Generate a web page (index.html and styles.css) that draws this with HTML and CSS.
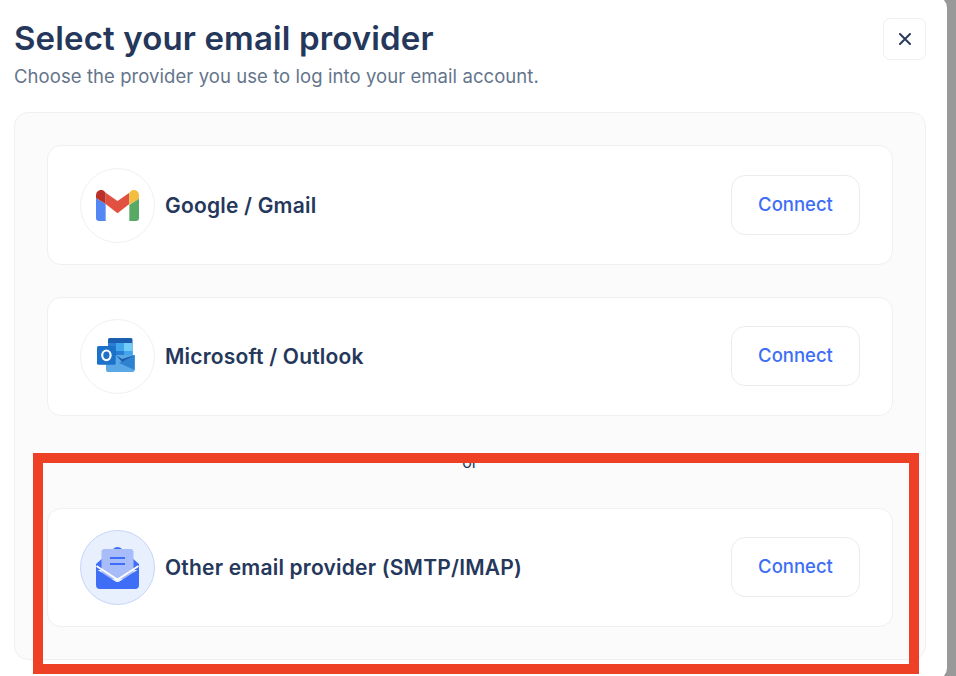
FILE: index.html
```html
<!DOCTYPE html>
<html lang="en">
<head>
    <meta charset="UTF-8">
    <meta name="viewport" content="width=device-width, initial-scale=1.0">
    <title>Select your email provider</title>
    <link rel="stylesheet" href="styles.css">
</head>
<body>
    <div class="modal">
        <div class="modal-header">
            <div>
                <h1 class="title">Select your email provider</h1>
                <p class="subtitle">Choose the provider you use to log into your email account.</p>
            </div>
            <button class="close-button" aria-label="Close">
                <svg width="12" height="12" viewBox="0 0 12 12"><path d="M1 1l10 10M11 1L1 11" stroke="#2a3b5c" stroke-width="2" stroke-linecap="round"/></svg>
            </button>
        </div>
        <div class="panel">
            <div class="card">
                <div class="provider">
                    <div class="icon-circle">
                        <svg width="43" height="31" viewBox="0 0 43 31">
                            <path d="M0 8L9.67 14V31H3a3 3 0 0 1-3-3z" fill="#5387f3"/>
                            <path d="M0 8V5a5 5 0 0 1 8-4l1.67 1.67V14z" fill="#b93128"/>
                            <path d="M9.67 2.67L21.5 11l11.83-8.33V14L21.5 23.3 9.67 14z" fill="#e05141"/>
                            <path d="M33.33 2.67L35 1a5 5 0 0 1 8 4v3.67L33.33 15z" fill="#f3bd42"/>
                            <path d="M33.33 15L43 8.67V28a3 3 0 0 1-3 3h-6.67z" fill="#58a866"/>
                        </svg>
                    </div>
                    <span class="provider-name">Google / Gmail</span>
                </div>
                <button class="connect">Connect</button>
            </div>
            <div class="card">
                <div class="provider">
                    <div class="icon-circle">
                        <svg width="41" height="37" viewBox="0 0 41 37">
                            <rect x="11" y="0" width="24.5" height="26" rx="1.5" fill="#1b5fae"/>
                            <rect x="11" y="5" width="8" height="8" fill="#2a7dd3"/>
                            <rect x="19" y="5" width="8" height="8" fill="#41a5ee"/>
                            <rect x="27" y="5" width="8.5" height="8" fill="#72cbf8"/>
                            <rect x="19" y="13" width="8" height="8" fill="#2a7dd3"/>
                            <rect x="27" y="13" width="8.5" height="8" fill="#41a5ee"/>
                            <path d="M9 17h28.7v15a2 2 0 0 1-2 2H11a2 2 0 0 1-2-2z" fill="#5aa9e6"/>
                            <path d="M22 25l15.7-8v15z" fill="#2f82cf"/>
                            <path d="M19 17l6 7 12.7-7-12.7 4z" fill="#1b5fae"/>
                            <rect x="0" y="8" width="18.7" height="18.7" rx="1.5" fill="#1c71c9"/>
                            <ellipse class="outlook-o" cx="9.4" cy="17.3" rx="4.2" ry="4.8"/>
                        </svg>
                    </div>
                    <span class="provider-name">Microsoft / Outlook</span>
                </div>
                <button class="connect">Connect</button>
            </div>
            <div class="divider">or</div>
            <div class="card">
                <div class="provider">
                    <div class="icon-circle other">
                        <svg width="43" height="43" viewBox="0 0 43 43">
                            <path d="M0 18L17 3a6 6 0 0 1 9 0l17 15v6H0z" fill="#3d6ef5"/>
                            <rect x="5.5" y="3" width="32" height="30" rx="3" fill="#a8bcfa"/>
                            <path d="M14 12h15M14 18h15" stroke="#3d6ef5" stroke-width="2"/>
                            <path d="M0 23l19.5 12.5a4 4 0 0 0 4 0L43 23v16a4 4 0 0 1-4 4H4a4 4 0 0 1-4-4z" fill="#3d6ef5"/>
                            <path d="M0.5 20l20 13a2 2 0 0 0 2 0l20-13" fill="none" stroke="#fff" stroke-width="2"/>
                        </svg>
                    </div>
                    <span class="provider-name">Other email provider (SMTP/IMAP)</span>
                </div>
                <button class="connect">Connect</button>
            </div>
        </div>
    </div>
    <div class="highlight"></div>
</body>
</html>
```

FILE: styles.css
```css
* {
    box-sizing: border-box;
}
html, body {
    height: 100%;
    overflow: hidden;
}
body {
    margin: 0;
    background-color: #999;
    font-family: Inter, "Liberation Sans", sans-serif;
    color: #25375b;
}
.modal {
    width: 947px;
    height: 684px;
    margin-top: -4px;
    padding: 22px 21px 0 14px;
    background-color: #fff;
    border-radius: 0 12px 12px 0;
}
.modal-header {
    display: flex;
    justify-content: space-between;
    align-items: flex-start;
    height: 94px;
}
.title {
    margin: 0;
    font-size: 33px;
    line-height: 40px;
    font-weight: 600;
    letter-spacing: 0.13px;
}
.subtitle {
    margin: 5px 0 0;
    font-size: 18.5px;
    line-height: 26px;
    letter-spacing: 0.07px;
    color: #64748b;
}
.close-button {
    display: flex;
    justify-content: center;
    align-items: center;
    width: 43px;
    height: 42px;
    padding: 0;
    background-color: #fff;
    border: 1px solid #eff0f2;
    border-radius: 7px;
}
.panel {
    display: flex;
    flex-direction: column;
    height: 548.2px;
    padding: 32.4px 32px 32px;
    background-color: #fbfbfb;
    border: 1px solid #f0f0f0;
    border-radius: 14px;
}
.card {
    display: flex;
    justify-content: space-between;
    align-items: center;
    height: 119.4px;
    padding: 0 32px;
    background-color: #fff;
    border: 1px solid #eff0f2;
    border-radius: 14px;
}
.card + .card {
    margin-top: 32px;
}
.provider {
    display: flex;
    align-items: center;
    gap: 10px;
}
.icon-circle {
    display: flex;
    justify-content: center;
    align-items: center;
    width: 75px;
    height: 75px;
    background-color: #fff;
    border: 1px solid #eff0f2;
    border-radius: 50%;
}
.icon-circle.other {
    background-color: #e8f0fe;
    border-color: #c5d5fb;
}
.outlook-o {
    fill: none;
    stroke: #fff;
    stroke-width: 2.2;
}
.provider-name {
    font-size: 21px;
    font-weight: 600;
    letter-spacing: 0.2px;
}
.connect {
    width: 129px;
    height: 60px;
    padding: 0 0 2px;
    background-color: #fff;
    border: 1px solid #eaecf0;
    border-radius: 14px;
    font-family: inherit;
    font-size: 18.5px;
    font-weight: 500;
    color: #3d6ef5;
}
.divider {
    height: 91.6px;
    line-height: 92px;
    text-align: center;
    font-size: 16px;
}
.highlight {
    position: absolute;
    left: 33px;
    top: 453px;
    width: 886px;
    height: 221px;
    border: 10px solid #ee4024;
}
```
